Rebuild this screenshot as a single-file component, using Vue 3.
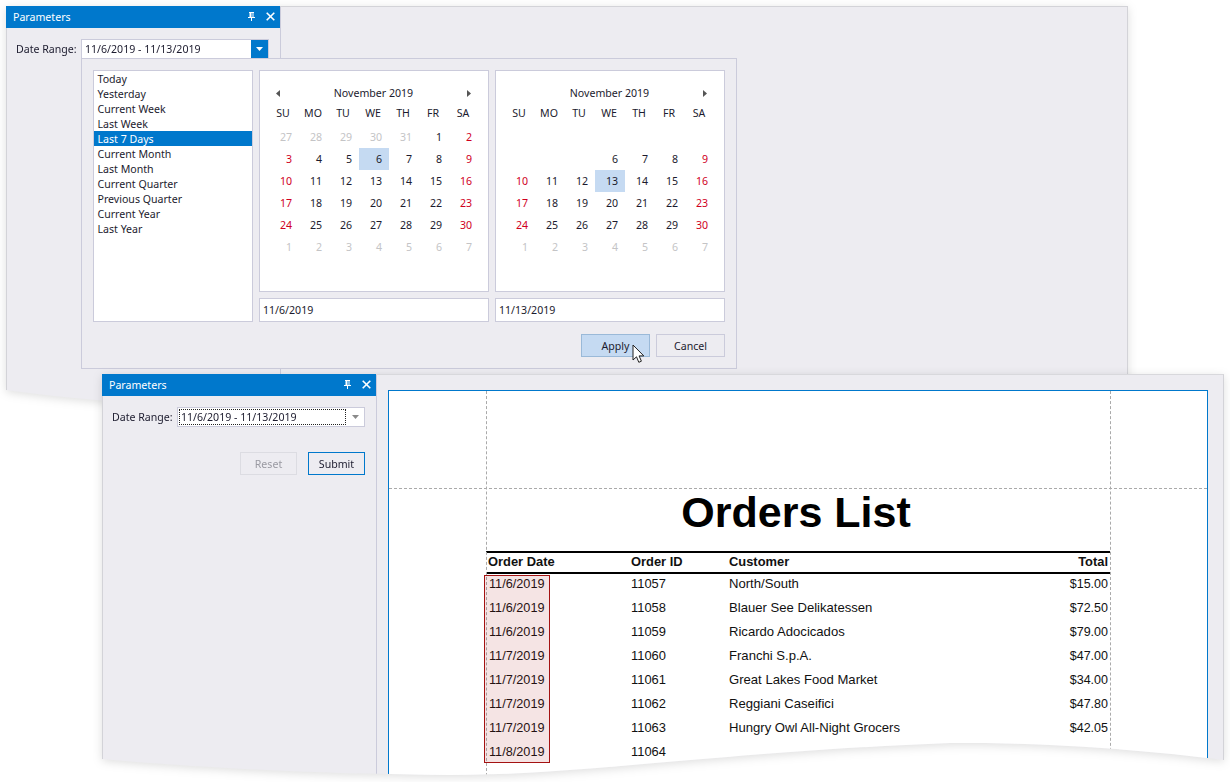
<script setup>
const presets = ['Today', 'Yesterday', 'Current Week', 'Last Week', 'Last 7 Days', 'Current Month', 'Last Month', 'Current Quarter', 'Previous Quarter', 'Current Year', 'Last Year']
const weekdays = ['SU', 'MO', 'TU', 'WE', 'TH', 'FR', 'SA']

function buildDays(selected, firstVisible) {
  const labels = [27, 28, 29, 30, 31]
  for (let d = 1; d <= 30; d++) labels.push(d)
  for (let d = 1; d <= 7; d++) labels.push(d)
  return labels.map((label, i) => {
    const inMonth = i >= 5 && i < 35
    const col = i % 7
    return {
      id: i,
      label: i < firstVisible ? '' : label,
      other: !inMonth,
      weekend: inMonth && (col === 0 || col === 6),
      selected: inMonth && label === selected,
    }
  })
}

const calendars = [
  { id: 'from', days: buildDays(6, 0), value: '11/6/2019', prev: true },
  { id: 'to', days: buildDays(13, 10), value: '11/13/2019', prev: false },
]

const orders = [
  { date: '11/6/2019', id: 11057, customer: 'North/South', total: '$15.00' },
  { date: '11/6/2019', id: 11058, customer: 'Blauer See Delikatessen', total: '$72.50' },
  { date: '11/6/2019', id: 11059, customer: 'Ricardo Adocicados', total: '$79.00' },
  { date: '11/7/2019', id: 11060, customer: 'Franchi S.p.A.', total: '$47.00' },
  { date: '11/7/2019', id: 11061, customer: 'Great Lakes Food Market', total: '$34.00' },
  { date: '11/7/2019', id: 11062, customer: 'Reggiani Caseifici', total: '$47.80' },
  { date: '11/7/2019', id: 11063, customer: 'Hungry Owl All-Night Grocers', total: '$42.05' },
  { date: '11/8/2019', id: 11064, customer: '', total: '' },
]
</script>

<template>
  <div class="canvas">
    <!-- back window: the popup is open -->
    <div class="window window--back">
      <div class="window__sheet window__sheet--back">
        <aside class="panel panel--back">
          <header class="panel__head">
            <span>Parameters</span>
            <span class="panel__icons">
              <svg width="9" height="9" viewBox="0 0 9 9"><path d="M2 0h5v1H6.500v4H8v1H5v3H4V6H1V5h1.500V1H2z M4.500 1v4h1V1z" fill="#fff" fill-rule="evenodd" /></svg>
              <svg width="9" height="9" viewBox="0 0 9 9"><path d="M0.700 0.700l7.600 7.600M8.300 0.700l-7.600 7.600" stroke="#fff" stroke-width="1.600" fill="none" /></svg>
            </span>
          </header>
          <div class="param-row param-row--back">
            <label class="param-row__label">Date Range:</label>
            <div class="combo combo--open">
              <span class="combo__text">11/6/2019 - 11/13/2019</span>
              <span class="combo__btn">
                <svg width="7" height="4" viewBox="0 0 7 4"><path d="M0 0h7L3.500 4z" fill="#fff" /></svg>
              </span>
            </div>
          </div>
        </aside>
      </div>
    </div>

    <!-- popup of the range editor -->
    <div class="popup">
      <div class="popup__body">
        <ul class="presets">
          <li
            v-for="item in presets"
            :key="item"
            class="presets__item"
            :class="{ 'presets__item--active': item === 'Last 7 Days' }"
          >
            {{ item }}
          </li>
        </ul>
        <div
          v-for="cal in calendars"
          :key="cal.id"
          class="range"
        >
          <div class="calendar">
            <div class="calendar__month">
              <svg class="calendar__arrow" :class="{ 'calendar__arrow--hidden': !cal.prev }" width="4" height="7" viewBox="0 0 4 7"><path d="M4 0v7L0 3.500z" fill="#555" /></svg>
              <span>November 2019</span>
              <svg class="calendar__arrow" width="4" height="7" viewBox="0 0 4 7"><path d="M0 0v7l4-3.500z" fill="#555" /></svg>
            </div>
            <div class="calendar__week">
              <span v-for="day in weekdays" :key="day">{{ day }}</span>
            </div>
            <div class="calendar__days">
              <span
                v-for="day in cal.days"
                :key="day.id"
                class="calendar__day"
                :class="{
                  'calendar__day--other': day.other,
                  'calendar__day--weekend': day.weekend,
                  'calendar__day--selected': day.selected,
                }"
              >{{ day.label }}</span>
            </div>
          </div>
          <div class="field">{{ cal.value }}</div>
        </div>
      </div>
      <div class="popup__actions">
        <button class="btn btn--hover" type="button">Apply</button>
        <button class="btn" type="button">Cancel</button>
      </div>
    </div>

    <svg class="cursor" width="14" height="21" viewBox="0 0 14 21">
      <path d="M1 1v15l3.500-3.200 2.300 5.500 2.600-1.100-2.300-5.300h4.700z" fill="#fff" stroke="#222" stroke-width="1" stroke-linejoin="round" />
    </svg>

    <!-- front window: the submitted report -->
    <div class="window window--front">
      <div class="window__sheet window__sheet--front">
        <aside class="panel panel--front">
          <header class="panel__head">
            <span>Parameters</span>
            <span class="panel__icons">
              <svg width="9" height="9" viewBox="0 0 9 9"><path d="M2 0h5v1H6.500v4H8v1H5v3H4V6H1V5h1.500V1H2z M4.500 1v4h1V1z" fill="#fff" fill-rule="evenodd" /></svg>
              <svg width="9" height="9" viewBox="0 0 9 9"><path d="M0.700 0.700l7.600 7.600M8.300 0.700l-7.600 7.600" stroke="#fff" stroke-width="1.600" fill="none" /></svg>
            </span>
          </header>
          <div class="param-row param-row--front">
            <label class="param-row__label">Date Range:</label>
            <div class="combo combo--focus">
              <span class="combo__text">11/6/2019 - 11/13/2019</span>
              <span class="combo__btn">
                <svg width="7" height="4" viewBox="0 0 7 4"><path d="M0 0h7L3.500 4z" fill="#8a8a8a" /></svg>
              </span>
            </div>
          </div>
          <div class="panel__actions">
            <button class="btn btn--disabled" type="button">Reset</button>
            <button class="btn btn--primary" type="button">Submit</button>
          </div>
        </aside>

        <main class="report">
          <span class="report__guide report__guide--h"></span>
          <span class="report__guide report__guide--left"></span>
          <span class="report__guide report__guide--right"></span>
          <span class="report__mark"></span>
          <div class="report__page">
            <h1 class="report__title">Orders List</h1>
            <div class="orders__head">
              <span>Order Date</span>
              <span>Order ID</span>
              <span>Customer</span>
              <span class="orders__total">Total</span>
            </div>
            <div
              v-for="(order, i) in orders"
              :key="i"
              class="orders__row"
            >
              <span class="orders__date">{{ order.date }}</span>
              <span class="orders__id">{{ order.id }}</span>
              <span class="orders__customer">{{ order.customer }}</span>
              <span class="orders__total orders__total--value">{{ order.total }}</span>
            </div>
          </div>
        </main>
      </div>
    </div>
  </div>
</template>

<style scoped>
.canvas {
  position: relative;
  width: 1230px;
  height: 782px;
  overflow: hidden;
  background: #fff;
  font-family: 'Noto Sans', 'Open Sans', sans-serif;
  font-size: 10.6px;
  color: #1c1b2e;
}

.window {
  position: absolute;
  filter: drop-shadow(0 2px 5px rgba(0, 0, 0, 0.13));
}

.window--back {
  left: 6px;
  top: 6px;
  width: 1122px;
  height: 400px;
}

.window--front {
  left: 102px;
  top: 374px;
  width: 1122px;
  height: 402px;
}

.window__sheet {
  display: flex;
  box-sizing: border-box;
  width: 100%;
  height: 100%;
  background: #edecf1;
  border: 1px solid #d3d3d8;
  border-bottom: 0;
}

.window__sheet--back {
  clip-path: path('M0 0H1122V400H200C140 400 60 392 0 384Z');
}

.window__sheet--front {
  clip-path: path('M0 0H1122V386C1050 377 950 368 848 369C620 378 480 401 348 401C220 400 100 394 0 385Z');
  border-top-color: #d8d8dc;
}

.panel {
  flex: none;
  display: flex;
  flex-direction: column;
  box-sizing: border-box;
  border-right: 1px solid #cbcbdb;
}

.panel--back {
  width: 274px;
}

.panel--front {
  width: 274px;
}

.panel__head {
  display: flex;
  align-items: center;
  justify-content: space-between;
  box-sizing: border-box;
  height: 22px;
  margin: -1px 0 0 -1px;
  padding: 0 5px 1px 7px;
  background: #0078cc;
  color: #fff;
  flex: none;
}

.panel__icons {
  display: flex;
  align-items: center;
  gap: 10px;
}

.param-row {
  display: flex;
  align-items: center;
  gap: 4px;
}

.param-row--back {
  padding: 11px 11px 0 9px;
}

.param-row--front {
  padding: 11px 11px 0 9px;
}

.param-row__label {
  flex: none;
  width: 61px;
  white-space: nowrap;
}

.combo {
  flex: 1;
  display: flex;
  align-items: center;
  box-sizing: border-box;
  height: 20px;
  background: #fff;
  border: 1px solid #cbcbdb;
}

.combo__text {
  flex: 1;
  padding-left: 3px;
  line-height: 18px;
  white-space: nowrap;
}

.combo__btn {
  flex: none;
  display: flex;
  align-items: center;
  justify-content: center;
  width: 17px;
  height: 100%;
}

.combo--open .combo__btn {
  background: #0078cc;
}

.combo--focus .combo__text {
  margin: 1px;
  padding-left: 1px;
  line-height: 14px;
  border: 1px dotted #222;
}

.panel__actions {
  display: flex;
  justify-content: flex-end;
  gap: 11px;
  padding: 25px 11px 0 0;
}

.btn {
  box-sizing: border-box;
  width: 69px;
  height: 23px;
  padding: 0;
  background: #edecf1;
  border: 1px solid #cbcbdb;
  font: inherit;
  color: inherit;
}

.btn--hover {
  background: #c5daf2;
  border-color: #9ab9d8;
}

.btn--disabled,
.btn--primary {
  width: 57px;
}

.btn--disabled {
  border-color: #dcdce2;
  color: #9a9aa2;
}

.btn--primary {
  border-color: #0078cc;
}

.popup {
  position: absolute;
  left: 81px;
  top: 58px;
  display: flex;
  flex-direction: column;
  box-sizing: border-box;
  width: 656px;
  height: 311px;
  padding: 11px;
  background: #edecf1;
  border: 1px solid #cbcbdb;
}

.popup__body {
  display: flex;
  gap: 6px;
}

.presets {
  flex: none;
  box-sizing: border-box;
  width: 160px;
  height: 252px;
  margin: 0;
  padding: 0;
  list-style: none;
  background: #fff;
  border: 1px solid #cbcbdb;
}

.presets__item {
  height: 15px;
  padding-left: 3.500px;
  line-height: 17px;
  white-space: nowrap;
}

.presets__item--active {
  background: #0078cc;
  color: #fff;
}

.range {
  flex: none;
  display: flex;
  flex-direction: column;
  gap: 6px;
  width: 230px;
}

.calendar {
  box-sizing: border-box;
  height: 222px;
  padding: 11px 9px 0;
  background: #fff;
  border: 1px solid #cbcbdb;
}

.calendar__month {
  display: flex;
  align-items: center;
  justify-content: space-between;
  height: 22px;
  padding: 0 8px 0 7px;
}

.calendar__arrow--hidden {
  visibility: hidden;
}

.calendar__week {
  display: grid;
  grid-template-columns: repeat(7, 30px);
  height: 22px;
  margin-left: -1px;
  line-height: 18px;
  text-align: center;
}

.calendar__days {
  display: grid;
  grid-template-columns: repeat(7, 30px);
  grid-auto-rows: 22px;
}

.calendar__day {
  padding-right: 7px;
  line-height: 22px;
  text-align: right;
}

.calendar__day--other {
  color: #c4c4c6;
}

.calendar__day--weekend {
  color: #d0001e;
}

.calendar__day--selected {
  background: #c5daf2;
}

.field {
  box-sizing: border-box;
  height: 24px;
  padding-left: 3px;
  line-height: 22px;
  background: #fff;
  border: 1px solid #cbcbdb;
}

.popup__actions {
  display: flex;
  justify-content: flex-end;
  gap: 6px;
  margin-top: 12px;
}

.cursor {
  position: absolute;
  left: 632px;
  top: 344px;
}

.report {
  position: relative;
  flex: 1;
  margin: 15px 15px 0 11px;
  background: #fff;
  border-top: 1px solid #0078cc;
  border-left: 1px solid #0078cc;
  border-right: 1px solid #0078cc;
  font-family: 'Liberation Sans', Arial, sans-serif;
  font-size: 12.9px;
  color: #111;
}

.report__page {
  box-sizing: border-box;
  width: 624px;
  margin-left: 97px;
  padding-top: 97px;
}

.report__title {
  box-sizing: border-box;
  margin: 0;
  height: 63px;
  padding-right: 4px;
  font-size: 43px;
  font-weight: 700;
  line-height: 48px;
  text-align: center;
  color: #000;
}

.orders__head,
.orders__row {
  display: grid;
  grid-template-columns: 143px 98px 1fr 90px;
  padding: 0 2px;
}

.orders__head {
  height: 19px;
  margin-bottom: 1px;
  border-top: 2px solid #000;
  border-bottom: 2px solid #000;
  line-height: 18px;
  font-weight: 700;
}

.orders__row {
  align-items: baseline;
  height: 24px;
  line-height: 17px;
}

.orders__date,
.orders__id,
.orders__customer,
.orders__total--value {
  line-height: 17px;
}

.orders__date {
  padding-left: 1px;
  font-size: 12.7px;
}

.orders__customer {
  font-size: 13.1px;
}

.orders__total {
  text-align: right;
}

.orders__total--value {
  font-size: 12.5px;
}

.report__guide {
  position: absolute;
  pointer-events: none;
}

.report__guide--h {
  left: 0;
  right: 0;
  top: 97px;
  border-top: 1px dashed #aaa;
}

.report__guide--left,
.report__guide--right {
  top: 0;
  bottom: 0;
  border-left: 1px dashed #aaa;
}

.report__guide--left {
  left: 97px;
}

.report__guide--right {
  left: 721px;
}

.report__mark {
  position: absolute;
  left: 95px;
  top: 184px;
  box-sizing: border-box;
  width: 66px;
  height: 188px;
  background: rgba(170, 30, 30, 0.12);
  border: 1px solid #a41212;
}
</style>

<style>
body {
  background: #fff;
}
</style>
